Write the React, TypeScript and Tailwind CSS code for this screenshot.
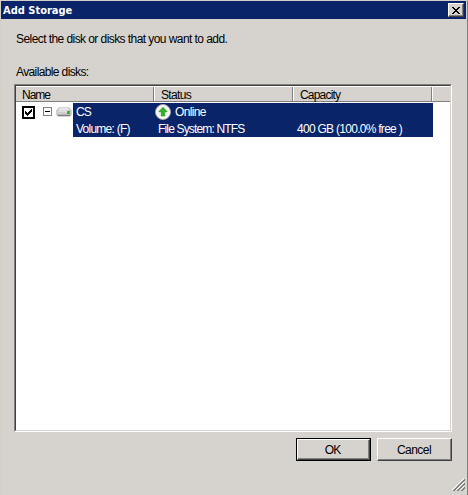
const CloseIcon = () => (
  <svg width="8" height="7" viewBox="0 0 8 7" shapeRendering="crispEdges">
    <path
      d="M0 0h2v1h-2zM6 0h2v1h-2zM1 1h2v1h-2zM5 1h2v1h-2zM2 2h4v1h-4zM3 3h2v1h-2zM2 4h4v1h-4zM1 5h2v1h-2zM5 5h2v1h-2zM0 6h2v1h-2zM6 6h2v1h-2z"
      fill="#000"
    />
  </svg>
);

const CheckIcon = () => (
  <svg width="7" height="7" viewBox="0 0 7 7" shapeRendering="crispEdges">
    <path
      d="M0 2h1v3h-1zM1 3h1v3h-1zM2 4h1v3h-1zM3 3h1v3h-1zM4 2h1v3h-1zM5 1h1v3h-1zM6 0h1v3h-1z"
      fill="#000"
    />
  </svg>
);

const DriveIcon = () => (
  <svg width="16" height="10" viewBox="0 0 16 10">
    <path d="M3 .5h10l2.500 3v4l-1.500 2H2L.5 7.500v-4z" fill="#aaa5a8" />
    <path d="M3.500 1h9l2 2.500h-13z" fill="#e8e6e8" />
    <rect x="1" y="3.500" width="14" height="4" rx="1" fill="#d0ccd0" />
    <path d="M2 4h9" stroke="#f2f0f2" />
    <path d="M2 8.500h12" stroke="#827b80" />
    <rect x="11" y="4" width="3" height="3" fill="#35c32b" />
    <rect x="12" y="4" width="1" height="3" fill="#22ad1c" />
  </svg>
);

const OnlineIcon = () => (
  <svg width="16" height="16" viewBox="0 0 16 16">
    <circle cx="8" cy="8" r="7.500" fill="#f1f0ed" stroke="#aaa8a6" />
    <circle cx="8" cy="8" r="6" fill="none" stroke="#fff" />
    <path d="M8 3.300l4.200 4.400H9.700V12H6.300V7.700H3.800z" fill="#30b525" stroke="#1c8c18" strokeWidth=".6" />
  </svg>
);

const ResizeGrip = () => (
  <svg width="13" height="13" viewBox="0 0 13 13" shapeRendering="crispEdges">
    <path d="M0 12L12 0M4 12l8-8M8 12l4-4" stroke="#fff" />
    <path d="M1 13L13 1M2 13L13 2M5 13l8-8M6 13l7-7M9 13l4-4M10 13l3-3" stroke="#808080" />
  </svg>
);

const columns = [
  { label: "Name", cell: "w-[138px] pl-[6px]", text: "tracking-[-1px]" },
  { label: "Status", cell: "w-[139px] pl-[7px]", text: "tracking-[-0.65px]" },
  { label: "Capacity", cell: "w-[139px] pl-[7px]", text: "tracking-[-0.8px]" },
];

const App = () => {
  return (
    <div className="flex h-[495px] w-[468px] flex-col overflow-hidden border-t border-l border-r border-t-[#d4d0c8] border-r-[#808080] border-l-[#d4d0c8] bg-[#d6d3ce] font-['Liberation_Sans',sans-serif] text-[12px] leading-[17px] text-black">
      <header className="mr-px flex h-[18px] shrink-0 items-center justify-between bg-[#0a246a] pr-[2px] pl-[2px]">
        <h1 className="font-['DejaVu_Sans_Condensed','DejaVu_Sans',sans-serif] text-[11px] leading-[17px] font-bold whitespace-nowrap text-white">
          Add Storage
        </h1>
        <button
          aria-label="Close"
          className="flex h-[14px] w-4 items-center justify-center border border-t-white border-r-[#404040] border-b-[#404040] border-l-white bg-[#d6d3ce] shadow-[inset_-1px_-1px_#808080]"
        >
          <CloseIcon />
        </button>
      </header>

      <main className="flex flex-col pr-[15px] pl-[13px]">
        <p className="mt-3 pl-[2px] whitespace-nowrap tracking-[-0.57px]">
          Select the disk or disks that you want to add.
        </p>
        <p className="mt-4 pl-[2px] tracking-[-0.62px]">Available disks:</p>

        <div className="mt-[3px] h-[348px] w-[438px] border border-t-[#808080] border-r-white border-b-white border-l-[#808080]">
          <div className="h-full border border-t-[#404040] border-r-[#d6d3ce] border-b-[#d6d3ce] border-l-[#404040] bg-white">
            <div className="flex h-4 border-t border-b border-t-white border-b-[#808080] bg-[#d6d3ce]">
              {columns.map((column) => (
                <div
                  key={column.label}
                  className={`${column.cell} shrink-0 border-r border-r-[#808080] shadow-[1px_0_#fff]`}
                >
                  <span className={`${column.text} leading-4`}>{column.label}</span>
                </div>
              ))}
            </div>

            <div className="mt-px flex h-[34px]">
              <div className="flex w-[57px] items-start pt-[3px] pl-[6px]">
                <span className="flex h-[13px] w-[13px] items-center justify-center border-2 border-black bg-white">
                  <CheckIcon />
                </span>
                <span className="mt-px ml-[8px] flex h-[9px] w-[9px] items-center justify-center border border-[#808080]">
                  <span className="h-px w-[5px] bg-black" />
                </span>
                <span className="mt-px ml-[4px] shrink-0">
                  <DriveIcon />
                </span>
              </div>
              <div className="grid h-[34px] w-[360px] grid-cols-[82px_139px_139px] grid-rows-[17px_16px] bg-[#0a246a] pt-px whitespace-nowrap text-white">
                <span className="pl-[3px] tracking-[-1px]">CS</span>
                <span className="flex">
                  <OnlineIcon />
                  <span className="ml-1 tracking-[-0.65px]">Online</span>
                </span>
                <span />
                <span className="pl-[3px] tracking-[-0.75px]">Volume: (F)</span>
                <span className="pl-[3px] tracking-[-0.84px]">File System: NTFS</span>
                <span className="pl-[3px] tracking-[-0.72px]">400 GB (100.0% free )</span>
              </div>
            </div>
          </div>
        </div>

        <div className="mt-[6px] flex gap-[6px] pl-[282px]">
          <button className="h-[23px] w-[75px] shrink-0 border border-black">
            <span className="flex h-full items-center justify-center border border-t-white border-r-[#404040] border-b-[#404040] border-l-white pt-[2px] pr-[2px] tracking-[-1px] shadow-[inset_-1px_-1px_#808080]">
              OK
            </span>
          </button>
          <button className="h-[23px] w-[75px] shrink-0 border border-t-white border-r-[#404040] border-b-[#404040] border-l-white pt-[2px] pr-px tracking-[-0.55px] shadow-[inset_-1px_-1px_#808080]">
            Cancel
          </button>
        </div>
      </main>

      <footer className="mt-auto flex justify-end pr-[2px] pb-[4px]">
        <ResizeGrip />
      </footer>
    </div>
  );
};

export default App;
